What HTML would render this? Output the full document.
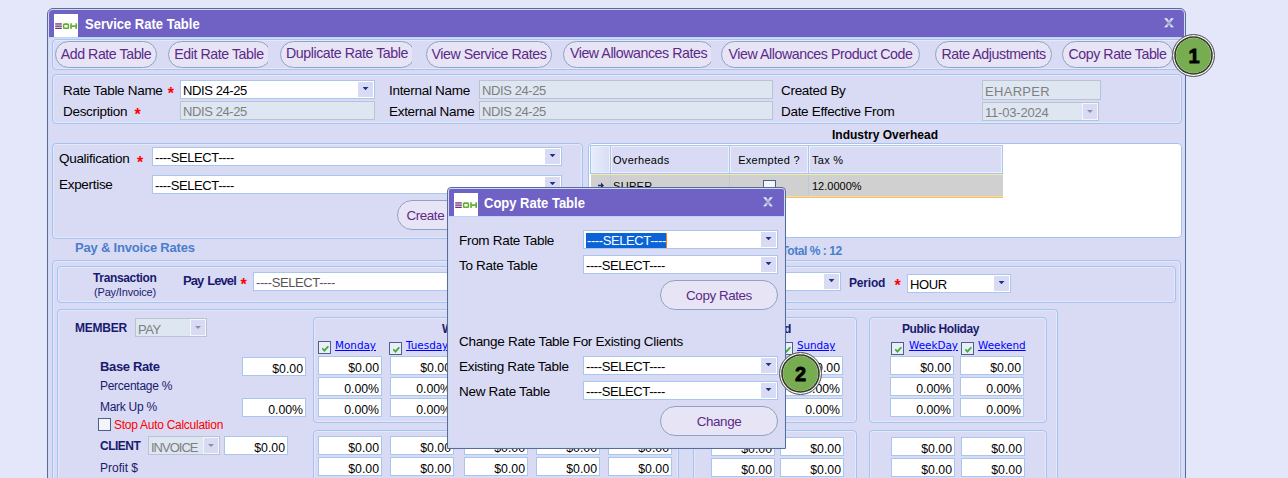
<!DOCTYPE html>
<html><head><meta charset="utf-8"><title>Service Rate Table</title>
<style>
*{box-sizing:border-box;margin:0;padding:0}
html,body{width:1288px;height:478px;overflow:hidden;background:#e4e7fa;font-family:"Liberation Sans",sans-serif;font-size:13px;color:#000}
.a{position:absolute;white-space:nowrap}
.win{position:absolute;background:#d9dbf5;border:1px solid #5a6b98;box-shadow:inset 0 0 0 1px #c9dcfa}
.tbar{position:absolute;background:#7062c4}
.ttl{position:absolute;color:#fff;font-weight:bold;font-size:13px;white-space:nowrap;transform:scaleY(1.1);transform-origin:50% 78%}
.panel{position:absolute;border:1px solid #a4c3ee;border-radius:4px;box-shadow:inset 0 0 0 1px #e3e8fb}
.btn{position:absolute;height:27px;border:1px solid #8ea3c4;border-radius:14px;background:#e7e4f6;color:#5b2a86;font-size:14.2px;letter-spacing:-0.44px;text-align:center;line-height:25px;white-space:nowrap}
.clip{position:absolute;overflow:hidden;height:27px}
.lbl{position:absolute;white-space:nowrap;font-size:13.5px;letter-spacing:-0.3px;line-height:16px;margin-top:1px}
.ast{position:absolute;color:#f00;font-weight:bold;font-size:16px;line-height:16px;width:8px;text-align:center}
.red{color:#f00}
.combo{position:absolute;background:#fff;border:1px solid #a9c6ef;height:19px;font-size:13px;line-height:17px;padding:1px 0 0 2px;white-space:nowrap;overflow:hidden;letter-spacing:-0.4px}
.combo i{position:absolute;right:1px;top:1px;bottom:1px;width:15px;background:#d9dbf5}
.combo i:after{content:"";position:absolute;left:4.5px;top:5px;width:6px;height:3.2px;background:#1c3583;clip-path:polygon(0 0,100% 0,50% 100%)}
.dis{position:absolute;background:#dde6f1;border:1px solid #b9c3d1;height:19px;font-size:13px;line-height:17px;padding:1px 0 0 2px;color:#7f7f7f;white-space:nowrap;overflow:hidden;letter-spacing:-0.4px}
.dis i{position:absolute;right:0;top:0;bottom:0;width:16px;background:#d9dbf5;border:1px solid #f4f6fd}
.dis i:after{content:"";position:absolute;left:4px;top:6px;border-left:3px solid transparent;border-right:3px solid transparent;border-top:3px solid #8a8fa6}
.nv{color:#1a1a6c}
.b{font-weight:bold}
.fld{position:absolute;background:#fff;border:1px solid #a9c6ef;height:19px;width:64px;font-size:12.3px;line-height:17px;text-align:right;padding:3px 2px 0 0;white-space:nowrap;overflow:hidden}
.cb{position:absolute;width:13px;height:13px;border:1px solid #4b6284;background:#ecedfa}
.cb.k:after{content:"";position:absolute;left:2.5px;top:3.8px;width:7.5px;height:6.5px;background:#3cb034;clip-path:polygon(0% 45%,18% 30%,38% 55%,82% 0%,100% 15%,40% 95%)}
.lnk{position:absolute;color:#00f;text-decoration:underline;font-family:"DejaVu Sans","Liberation Sans",sans-serif;font-size:10.4px;line-height:13px;white-space:nowrap}
.num{position:absolute;width:43px;height:43px;border-radius:50%;background:#fff;border:1px solid #555;box-shadow:inset 0 0 0 1.2px #fff,inset 0 0 0 2.8px #343a2c}
.num b{position:absolute;left:3px;top:3px;right:3px;bottom:3px;border-radius:50%;background:#77ad50;color:#000;font-size:20px;font-weight:bold;text-align:center;line-height:37px;-webkit-text-stroke:0.8px #000;padding-left:1px;font-family:"Liberation Sans",sans-serif}
.gh{position:absolute;background:#d9dbf5;border:1px solid #a9c6ef;box-shadow:inset 0 0 0 1px #eef0fc;font-size:11px;letter-spacing:0.3px;line-height:29px;white-space:nowrap;height:29px;top:0}
</style></head><body>

<!-- main window -->
<div class="win" style="left:47px;top:8px;width:1139px;height:490px;border-radius:6px 6px 0 0"></div>
<div class="tbar" style="left:49px;top:10px;width:1135px;height:27px;border-radius:4px 4px 0 0"></div>
<div class="a" style="left:49px;top:37px;width:1135px;height:1px;background:#bcd4f7"></div>
<!-- icon -->
<div class="a" style="left:54px;top:14px;width:24px;height:23px;background:#fff"></div>
<svg class="a" style="left:54px;top:14px" width="24" height="23" viewBox="0 0 24 23"><g fill="#6b2f7c"><rect x="1.2" y="9.3" width="6.6" height="1.3"/><rect x="1.2" y="11.5" width="6.6" height="1.3"/><rect x="1.2" y="13.7" width="6.6" height="1.3"/></g><g fill="none" stroke="#5fb030" stroke-width="1.6"><rect x="9.6" y="10.1" width="4.8" height="4.1" rx="0.8"/><path d="M17 9.3v5.7M22.2 9.3v5.7M17 12.1h5.2"/></g></svg>
<div class="ttl" style="left:85px;top:16.5px;line-height:16px">Service Rate Table</div>
<svg class="a" style="left:1163.5px;top:18px" width="10" height="10" viewBox="0 0 10 10"><defs><linearGradient id="gx1" x1="0" y1="0" x2="0" y2="1"><stop offset="0" stop-color="#f4f6fb"/><stop offset="0.25" stop-color="#c9d3e8"/><stop offset="0.55" stop-color="#8fa3c8"/><stop offset="0.8" stop-color="#c4cfe6"/><stop offset="1" stop-color="#fff"/></linearGradient></defs><path d="M0.2 0.3H3L9.8 9.3H7zM7 0.3H9.8L3 9.3H0.2z" fill="url(#gx1)"/></svg>

<!-- toolbar -->
<div class="panel" style="left:52px;top:39px;width:1130px;height:31px"></div>
<div class="btn" style="left:55px;top:41px;width:102px">Add Rate Table</div>
<div class="clip" style="left:168px;top:41px;width:100px"><div class="btn" style="left:0;top:0;width:103px;padding-right:1px">Edit Rate Table</div></div>
<div class="clip" style="left:280px;top:41px;width:132px"><div class="btn" style="left:0;top:0;width:135px;padding-right:1px;line-height:23px">Duplicate Rate Table</div></div>
<div class="btn" style="left:426px;top:41px;width:126px">View Service Rates</div>
<div class="clip" style="left:563px;top:41px;width:148px"><div class="btn" style="left:0;top:0;width:151px;padding-right:0;line-height:23px">View Allowances Rates</div></div>
<div class="btn" style="left:721px;top:41px;width:199px">View Allowances Product Code</div>
<div class="btn" style="left:935px;top:41px;width:117px">Rate Adjustments</div>
<div class="btn" style="left:1062px;top:41px;width:111px">Copy Rate Table</div>

<!-- header panel -->
<div class="panel" style="left:52px;top:74px;width:1130px;height:50px"></div>
<div class="lbl" style="left:63px;top:82px">Rate Table Name</div>
<div class="lbl" style="left:63px;top:103px">Description</div>
<div class="combo" style="left:180px;top:80px;width:195px">NDIS 24-25<i></i></div>
<div class="dis" style="left:180px;top:101px;width:195px">NDIS 24-25</div>
<div class="lbl" style="left:389px;top:82px">Internal Name</div>
<div class="lbl" style="left:389px;top:103px">External Name</div>
<div class="dis" style="left:479px;top:80px;width:294px">NDIS 24-25</div>
<div class="dis" style="left:479px;top:101px;width:294px">NDIS 24-25</div>
<div class="lbl" style="left:781px;top:82px">Created By</div>
<div class="lbl" style="left:781px;top:103px">Date Effective From</div>
<div class="dis" style="left:982px;top:80px;width:119px;height:20px;padding-top:2px;letter-spacing:0.3px">EHARPER</div>
<div class="dis" style="left:982px;top:102px;width:117px;letter-spacing:-0.2px">11-03-2024<i></i></div>

<div class="a b" style="left:832px;top:128px;font-size:12px;letter-spacing:0;line-height:15px">Industry Overhead</div>

<!-- qualification panel -->
<div class="panel" style="left:52px;top:143px;width:531px;height:96px"></div>
<div class="lbl" style="left:59px;top:150px">Qualification</div>
<div class="lbl" style="left:59px;top:176px">Expertise</div>
<div class="combo" style="left:152px;top:147px;width:410px">----SELECT----<i></i></div>
<div class="combo" style="left:152px;top:175px;width:410px">----SELECT----<i></i></div>
<div class="btn" style="left:397px;top:200px;width:130px;height:30px;border-radius:15px;text-align:left;padding-left:8.5px;line-height:29px;font-size:13.4px;letter-spacing:-0.42px">Create</div>

<!-- grid -->
<div class="panel" style="left:588px;top:143px;width:594px;height:95px;background:#fff;box-shadow:none"></div>
<div class="a" style="left:591px;top:145px;width:412px;height:29px">
 <div class="gh" style="left:-1px;width:21px;background:linear-gradient(to right,#e6effc,#d9dbf5)"></div>
 <div class="gh" style="left:19px;width:120px;padding-left:2px">Overheads</div>
 <div class="gh" style="left:138px;width:80px;text-align:center">Exempted ?</div>
 <div class="gh" style="left:217px;width:195px;padding-left:3px">Tax %</div>
</div>
<div class="a" style="left:591px;top:174px;width:412px;height:24px;background:#d0d0d0;border-top:1px solid #f1e9a8;border-bottom:1px solid #f7c060;box-shadow:inset 0 -1px 0 #f3dca6"></div>
<div class="a" style="left:610px;top:175px;width:1px;height:20px;background:#bfc8da"></div>
<div class="a" style="left:729px;top:175px;width:1px;height:20px;background:#bfc8da"></div>
<div class="a" style="left:808px;top:175px;width:1px;height:20px;background:#bfc8da"></div>
<svg class="a" style="left:598px;top:182px" width="6" height="7" viewBox="0 0 8 9"><path d="M0 3.5h4V0.5L8 4.5L4 8.5V5.5H0z" fill="#1b2d6b"/></svg>
<div class="a" style="left:613px;top:179px;font-size:11px;letter-spacing:0.3px;line-height:14px">SUPER</div>
<div class="a" style="left:763px;top:180px;width:13px;height:13px;border:1px solid #4b6284;background:#f4f4fb"></div>
<div class="a" style="left:812px;top:179px;font-size:11px;letter-spacing:0;line-height:14px">12.0000%</div>

<!-- Pay & invoice -->
<div class="a b" style="left:75px;top:240px;font-size:13px;letter-spacing:-0.2px;color:#4a7ecb;line-height:16px">Pay &amp; Invoice Rates</div>
<div class="a b" style="left:781.4px;top:244px;font-size:12px;letter-spacing:-0.46px;color:#4a7ecb;line-height:15px">Total % : 12</div>
<div class="panel" style="left:52px;top:260px;width:1129px;height:240px"></div>
<div class="panel" style="left:57px;top:266px;width:1119px;height:37px"></div>
<div class="a b nv" style="left:93px;top:271px;font-size:12px;letter-spacing:-0.35px;line-height:15px">Transaction</div>
<div class="a nv" style="left:94px;top:285px;font-size:11px;letter-spacing:-0.17px;line-height:14px">(Pay/Invoice)</div>
<div class="a b nv" style="left:183px;top:273px;font-size:13px;letter-spacing:-0.9px;line-height:16px;word-spacing:1px">Pay Level</div>
<div class="combo" style="left:253px;top:272px;width:588px;color:#555">----SELECT----<i></i></div>
<div class="a b nv" style="left:849px;top:275.5px;font-size:12px;letter-spacing:-0.2px;line-height:15px">Period</div>

<div class="combo" style="left:907px;top:274px;width:104px">HOUR<i></i></div>

<div class="panel" style="left:57px;top:309px;width:1001px;height:200px"></div>
<div class="a b nv" style="left:75px;top:321px;font-size:12px;letter-spacing:-0.25px;line-height:15px">MEMBER</div>
<div class="dis" style="left:135px;top:318px;width:72px;padding-top:2px">PAY<i></i></div>
<div class="a b nv" style="left:100px;top:359px;font-size:13px;letter-spacing:-0.35px;line-height:16px">Base Rate</div>
<div class="fld" style="left:242px;top:357px;height:19px">$0.00</div>
<div class="a nv" style="left:100px;top:379.3px;font-size:12px;letter-spacing:-0.28px;line-height:15px">Percentage %</div>
<div class="a nv" style="left:100px;top:400px;font-size:12px;letter-spacing:-0.28px;line-height:15px">Mark Up %</div>
<div class="fld" style="left:242px;top:398px;height:19px">0.00%</div>
<div class="cb" style="left:98px;top:418px;background:#f4f4fb"></div>
<div class="a red" style="left:114px;top:418px;font-size:12px;letter-spacing:-0.27px;line-height:15px">Stop Auto Calculation</div>
<div class="a b nv" style="left:100px;top:439.3px;font-size:12px;letter-spacing:-0.5px;line-height:15px">CLIENT</div>
<div class="dis" style="left:148px;top:436px;width:72px;padding-top:2px;letter-spacing:-1px">INVOICE<i></i></div>
<div class="fld" style="left:224px;top:436px;height:19px">$0.00</div>
<div class="a nv" style="left:100px;top:460.5px;font-size:12px;letter-spacing:0;line-height:15px">Profit $</div>

<!-- weekday panel -->
<div class="panel" style="left:313px;top:317px;width:366px;height:106px"></div>
<div class="a b nv" style="left:442px;top:322px;font-size:12px;line-height:15px">Weekday</div>
<div class="cb k" style="left:318px;top:341px"></div><div class="lnk" style="left:335px;top:339px">Monday</div>
<div class="cb k" style="left:389px;top:342px"></div><div class="lnk" style="left:406px;top:339px">Tuesday</div>
<div class="fld" style="left:318px;top:356px">$0.00</div><div class="fld" style="left:390px;top:356px">$0.00</div><div class="fld" style="left:464px;top:356px">$0.00</div><div class="fld" style="left:536px;top:356px">$0.00</div><div class="fld" style="left:608px;top:356px">$0.00</div>
<div class="fld" style="left:318px;top:377px">0.00%</div><div class="fld" style="left:390px;top:377px">0.00%</div><div class="fld" style="left:464px;top:377px">0.00%</div><div class="fld" style="left:536px;top:377px">0.00%</div><div class="fld" style="left:608px;top:377px">0.00%</div>
<div class="fld" style="left:318px;top:398px">0.00%</div><div class="fld" style="left:390px;top:398px">0.00%</div><div class="fld" style="left:464px;top:398px">0.00%</div><div class="fld" style="left:536px;top:398px">0.00%</div><div class="fld" style="left:608px;top:398px">0.00%</div>

<!-- weekend panel -->
<div class="panel" style="left:693px;top:317px;width:164px;height:106px"></div>
<div class="a b nv" style="left:740px;top:322px;font-size:12px;line-height:15px;letter-spacing:-0.2px">Weekend</div>
<div class="cb k" style="left:711px;top:342px"></div><div class="lnk" style="left:728px;top:339px">Saturday</div>
<div class="cb k" style="left:780px;top:342px"></div><div class="lnk" style="left:797px;top:339px;letter-spacing:-0.1px">Sunday</div>
<div class="fld" style="left:711px;top:356px;width:62px">$0.00</div><div class="fld" style="left:780px;top:356px;width:63px">$0.00</div>
<div class="fld" style="left:711px;top:377px;width:62px">0.00%</div><div class="fld" style="left:780px;top:377px;width:63px">0.00%</div>
<div class="fld" style="left:711px;top:398px;width:62px">0.00%</div><div class="fld" style="left:780px;top:398px;width:63px">0.00%</div>

<!-- public holiday panel -->
<div class="panel" style="left:869px;top:317px;width:178px;height:106px"></div>
<div class="a b nv" style="left:902px;top:322px;font-size:12px;line-height:15px;letter-spacing:-0.4px">Public Holiday</div>
<div class="cb k" style="left:891px;top:342px"></div><div class="lnk" style="left:909px;top:339px">WeekDay</div>
<div class="cb k" style="left:961px;top:342px"></div><div class="lnk" style="left:978px;top:339px">Weekend</div>
<div class="fld" style="left:890px;top:356px">$0.00</div><div class="fld" style="left:960px;top:356px">$0.00</div>
<div class="fld" style="left:890px;top:377px">0.00%</div><div class="fld" style="left:960px;top:377px">0.00%</div>
<div class="fld" style="left:890px;top:398px">0.00%</div><div class="fld" style="left:960px;top:398px">0.00%</div>

<!-- second row panels -->
<div class="panel" style="left:313px;top:430px;width:366px;height:80px"></div>
<div class="fld" style="left:318px;top:436px;height:19px">$0.00</div><div class="fld" style="left:390px;top:436px;height:19px">$0.00</div><div class="fld" style="left:464px;top:436px;height:19px">$0.00</div><div class="fld" style="left:536px;top:436px;height:19px">$0.00</div><div class="fld" style="left:608px;top:436px;height:19px">$0.00</div>
<div class="fld" style="left:318px;top:457px;height:19px">$0.00</div><div class="fld" style="left:390px;top:457px;height:19px">$0.00</div><div class="fld" style="left:464px;top:457px;height:19px">$0.00</div><div class="fld" style="left:536px;top:457px;height:19px">$0.00</div><div class="fld" style="left:608px;top:457px;height:19px">$0.00</div>
<div class="panel" style="left:693px;top:430px;width:164px;height:80px"></div>
<div class="fld" style="left:711px;top:437px;height:19px">$0.00</div><div class="fld" style="left:780px;top:437px;height:19px">$0.00</div>
<div class="fld" style="left:711px;top:458px;height:19px">$0.00</div><div class="fld" style="left:780px;top:458px;height:19px">$0.00</div>
<div class="panel" style="left:869px;top:430px;width:178px;height:80px"></div>
<div class="fld" style="left:891px;top:437px;height:19px">$0.00</div><div class="fld" style="left:961px;top:437px;height:19px">$0.00</div>
<div class="fld" style="left:891px;top:458px;height:19px">$0.00</div><div class="fld" style="left:961px;top:458px;height:19px">$0.00</div>

<!-- dialog -->
<div class="win" style="left:447px;top:187px;width:339px;height:262px;border-radius:4px 4px 0 0"></div>
<div class="tbar" style="left:449px;top:189px;width:335px;height:27px;border-radius:2px 2px 0 0"></div>
<div class="a" style="left:449px;top:216px;width:335px;height:1px;background:#bcd4f7"></div>
<div class="a" style="left:454px;top:193px;width:24px;height:23px;background:#fff"></div>
<svg class="a" style="left:454px;top:193px" width="24" height="23" viewBox="0 0 24 23"><g fill="#6b2f7c"><rect x="1.2" y="9.3" width="6.6" height="1.3"/><rect x="1.2" y="11.5" width="6.6" height="1.3"/><rect x="1.2" y="13.7" width="6.6" height="1.3"/></g><g fill="none" stroke="#5fb030" stroke-width="1.6"><rect x="9.6" y="10.1" width="4.8" height="4.1" rx="0.8"/><path d="M17 9.3v5.7M22.2 9.3v5.7M17 12.1h5.2"/></g></svg>
<div class="ttl" style="left:484px;top:196px;line-height:16px">Copy Rate Table</div>
<svg class="a" style="left:763px;top:197px" width="10" height="10" viewBox="0 0 10 10"><defs><linearGradient id="gx2" x1="0" y1="0" x2="0" y2="1"><stop offset="0" stop-color="#f4f6fb"/><stop offset="0.25" stop-color="#c9d3e8"/><stop offset="0.55" stop-color="#8fa3c8"/><stop offset="0.8" stop-color="#c4cfe6"/><stop offset="1" stop-color="#fff"/></linearGradient></defs><path d="M0.2 0.3H3L9.8 9.3H7zM7 0.3H9.8L3 9.3H0.2z" fill="url(#gx2)"/></svg>
<div class="lbl" style="left:459px;top:231.5px">From Rate Table</div>
<div class="lbl" style="left:459px;top:256.5px">To Rate Table</div>
<div class="combo" style="left:583px;top:230px;width:195px;padding-left:2px"><span style="background:#0a64d8;color:#fff;display:inline-block;height:15px;line-height:15px;margin-top:1px;padding-left:1px;border-right:1px solid #f08020">----SELECT----</span><i></i></div>
<div class="combo" style="left:583px;top:255px;width:195px">----SELECT----<i></i></div>
<div class="btn" style="left:660px;top:280px;width:118px;height:30px;border-radius:15px;line-height:29px;font-size:13.4px;letter-spacing:-0.42px">Copy Rates</div>
<div class="lbl" style="left:459px;top:332.5px">Change Rate Table For Existing Clients</div>
<div class="lbl" style="left:459px;top:357.5px">Existing Rate Table</div>
<div class="lbl" style="left:459px;top:382.5px">New Rate Table</div>
<div class="combo" style="left:583px;top:356px;width:195px">----SELECT----<i></i></div>
<div class="combo" style="left:583px;top:381px;width:195px">----SELECT----<i></i></div>
<div class="btn" style="left:660px;top:406px;width:118px;height:30px;border-radius:15px;line-height:29px;font-size:13.4px;letter-spacing:-0.42px">Change</div>

<!-- asterisks -->
<div class="ast" style="left:166.9px;top:86.4px">*</div>
<div class="ast" style="left:133.6px;top:107.4px">*</div>
<div class="ast" style="left:136.0px;top:154.8px">*</div>
<div class="ast" style="left:239.7px;top:277.4px">*</div>
<div class="ast" style="left:893.5px;top:278.2px">*</div>
<!-- markers -->
<div class="num" style="left:1172px;top:34px"><b>1</b></div>
<div class="num" style="left:778.5px;top:352px"><b>2</b></div>
</body></html>
